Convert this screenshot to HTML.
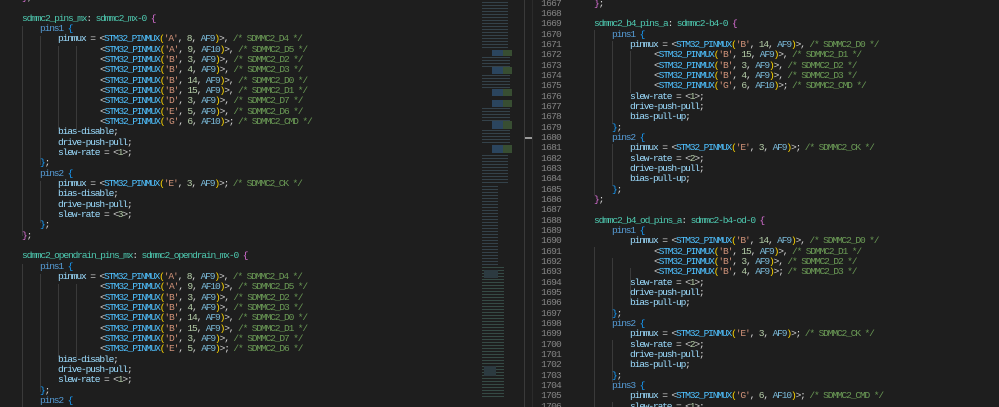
<!DOCTYPE html>
<html><head><meta charset="utf-8">
<style>
html,body{margin:0;padding:0;background:#1e1e1e;width:999px;height:407px;overflow:hidden;position:relative}
.pane{position:absolute;top:0;font-family:"Liberation Mono",monospace;font-size:9.6px;letter-spacing:-1.16px;color:#d4d4d4;}
.pane div{height:10.34px;line-height:10.34px;white-space:pre;}
.l0{padding-left:22px}.l1{padding-left:40px}.l2{padding-left:58px}.lc{padding-left:100px}
.r0{padding-left:594px}.r1{padding-left:612px}.r2{padding-left:630px}.rc{padding-left:654px}
.t{color:#4ec9b0}.p{color:#da70d6}.b{color:#569cd6}.bb{color:#179fff}.v{color:#9cdcfe}.f{color:#4fc1ff}
.y{color:#ffd700}.s{color:#ce9178}.n{color:#b5cea8}.c{color:#6a9955}.a{color:#7ab9d8}
.g{position:absolute;width:1px;background:#3a3a3a}
.ln{position:absolute;left:527px;width:34px;text-align:right;color:#858585;font-family:"Liberation Mono",monospace;font-size:9.6px;letter-spacing:-0.8px;}
.ln div{height:10.34px;line-height:10.34px}
.mm{position:absolute;height:1px}
.blk{position:absolute;left:16px;width:20px;background:repeating-linear-gradient(180deg,transparent 0 1px,rgba(0,0,0,0) 1px 2px),linear-gradient(90deg,#2f4f6e 0 55%,#3f5a38 55%);opacity:.8}
.dl{position:absolute;left:6px;width:30px;background:repeating-linear-gradient(180deg,#34424a 0 1px,transparent 1px 3px)}
</style></head><body>

<div class="g" style="left:22px;top:26px;height:210px"></div>
<div class="g" style="left:40px;top:36px;height:129px"></div>
<div class="g" style="left:40px;top:181px;height:42px"></div>
<div class="g" style="left:58px;top:46px;height:83px"></div>
<div class="g" style="left:76px;top:46px;height:83px"></div>
<div class="g" style="left:22px;top:264px;height:143px"></div>
<div class="g" style="left:40px;top:274px;height:118px"></div>
<div class="g" style="left:58px;top:284px;height:73px"></div>
<div class="g" style="left:76px;top:284px;height:73px"></div>
<div class="g" style="left:594px;top:30px;height:165px"></div>
<div class="g" style="left:612px;top:41px;height:83px"></div>
<div class="g" style="left:612px;top:144px;height:42px"></div>
<div class="g" style="left:630px;top:51px;height:42px"></div>
<div class="g" style="left:594px;top:247px;height:160px"></div>
<div class="g" style="left:612px;top:258px;height:62px"></div>
<div class="g" style="left:612px;top:340px;height:42px"></div>
<div class="g" style="left:612px;top:402px;height:5px"></div>
<div class="g" style="left:630px;top:268px;height:31px"></div>

<div class="pane" style="left:0;top:-6.9px;width:476px">
<div class="l0"><span class="p">}</span>;</div>
<div></div>
<div class="l0"><span class="t">sdmmc2_pins_mx</span>: <span class="t">sdmmc2_mx-0</span> <span class="p">{</span></div>
<div class="l1"><span class="b">pins1</span> <span class="bb">{</span></div>
<div class="l2"><span class="v">pinmux</span> = &lt;<span class="f">STM32_PINMUX</span><span class="y">(</span><span class="s">'A'</span>, <span class="n">8</span>, <span class="a">AF9</span><span class="y">)</span>&gt;, <span class="c">/* SDMMC2_D4 */</span></div>
<div class="lc">&lt;<span class="f">STM32_PINMUX</span><span class="y">(</span><span class="s">'A'</span>, <span class="n">9</span>, <span class="a">AF10</span><span class="y">)</span>&gt;, <span class="c">/* SDMMC2_D5 */</span></div>
<div class="lc">&lt;<span class="f">STM32_PINMUX</span><span class="y">(</span><span class="s">'B'</span>, <span class="n">3</span>, <span class="a">AF9</span><span class="y">)</span>&gt;, <span class="c">/* SDMMC2_D2 */</span></div>
<div class="lc">&lt;<span class="f">STM32_PINMUX</span><span class="y">(</span><span class="s">'B'</span>, <span class="n">4</span>, <span class="a">AF9</span><span class="y">)</span>&gt;, <span class="c">/* SDMMC2_D3 */</span></div>
<div class="lc">&lt;<span class="f">STM32_PINMUX</span><span class="y">(</span><span class="s">'B'</span>, <span class="n">14</span>, <span class="a">AF9</span><span class="y">)</span>&gt;, <span class="c">/* SDMMC2_D0 */</span></div>
<div class="lc">&lt;<span class="f">STM32_PINMUX</span><span class="y">(</span><span class="s">'B'</span>, <span class="n">15</span>, <span class="a">AF9</span><span class="y">)</span>&gt;, <span class="c">/* SDMMC2_D1 */</span></div>
<div class="lc">&lt;<span class="f">STM32_PINMUX</span><span class="y">(</span><span class="s">'D'</span>, <span class="n">3</span>, <span class="a">AF9</span><span class="y">)</span>&gt;, <span class="c">/* SDMMC2_D7 */</span></div>
<div class="lc">&lt;<span class="f">STM32_PINMUX</span><span class="y">(</span><span class="s">'E'</span>, <span class="n">5</span>, <span class="a">AF9</span><span class="y">)</span>&gt;, <span class="c">/* SDMMC2_D6 */</span></div>
<div class="lc">&lt;<span class="f">STM32_PINMUX</span><span class="y">(</span><span class="s">'G'</span>, <span class="n">6</span>, <span class="a">AF10</span><span class="y">)</span>&gt;; <span class="c">/* SDMMC2_CMD */</span></div>
<div class="l2"><span class="v">bias-disable</span>;</div>
<div class="l2"><span class="v">drive-push-pull</span>;</div>
<div class="l2"><span class="v">slew-rate</span> = &lt;<span class="n">1</span>&gt;;</div>
<div class="l1"><span class="bb">}</span>;</div>
<div class="l1"><span class="b">pins2</span> <span class="bb">{</span></div>
<div class="l2"><span class="v">pinmux</span> = &lt;<span class="f">STM32_PINMUX</span><span class="y">(</span><span class="s">'E'</span>, <span class="n">3</span>, <span class="a">AF9</span><span class="y">)</span>&gt;; <span class="c">/* SDMMC2_CK */</span></div>
<div class="l2"><span class="v">bias-disable</span>;</div>
<div class="l2"><span class="v">drive-push-pull</span>;</div>
<div class="l2"><span class="v">slew-rate</span> = &lt;<span class="n">3</span>&gt;;</div>
<div class="l1"><span class="bb">}</span>;</div>
<div class="l0"><span class="p">}</span>;</div>
<div></div>
<div class="l0"><span class="t">sdmmc2_opendrain_pins_mx</span>: <span class="t">sdmmc2_opendrain_mx-0</span> <span class="p">{</span></div>
<div class="l1"><span class="b">pins1</span> <span class="bb">{</span></div>
<div class="l2"><span class="v">pinmux</span> = &lt;<span class="f">STM32_PINMUX</span><span class="y">(</span><span class="s">'A'</span>, <span class="n">8</span>, <span class="a">AF9</span><span class="y">)</span>&gt;, <span class="c">/* SDMMC2_D4 */</span></div>
<div class="lc">&lt;<span class="f">STM32_PINMUX</span><span class="y">(</span><span class="s">'A'</span>, <span class="n">9</span>, <span class="a">AF10</span><span class="y">)</span>&gt;, <span class="c">/* SDMMC2_D5 */</span></div>
<div class="lc">&lt;<span class="f">STM32_PINMUX</span><span class="y">(</span><span class="s">'B'</span>, <span class="n">3</span>, <span class="a">AF9</span><span class="y">)</span>&gt;, <span class="c">/* SDMMC2_D2 */</span></div>
<div class="lc">&lt;<span class="f">STM32_PINMUX</span><span class="y">(</span><span class="s">'B'</span>, <span class="n">4</span>, <span class="a">AF9</span><span class="y">)</span>&gt;, <span class="c">/* SDMMC2_D3 */</span></div>
<div class="lc">&lt;<span class="f">STM32_PINMUX</span><span class="y">(</span><span class="s">'B'</span>, <span class="n">14</span>, <span class="a">AF9</span><span class="y">)</span>&gt;, <span class="c">/* SDMMC2_D0 */</span></div>
<div class="lc">&lt;<span class="f">STM32_PINMUX</span><span class="y">(</span><span class="s">'B'</span>, <span class="n">15</span>, <span class="a">AF9</span><span class="y">)</span>&gt;, <span class="c">/* SDMMC2_D1 */</span></div>
<div class="lc">&lt;<span class="f">STM32_PINMUX</span><span class="y">(</span><span class="s">'D'</span>, <span class="n">3</span>, <span class="a">AF9</span><span class="y">)</span>&gt;, <span class="c">/* SDMMC2_D7 */</span></div>
<div class="lc">&lt;<span class="f">STM32_PINMUX</span><span class="y">(</span><span class="s">'E'</span>, <span class="n">5</span>, <span class="a">AF9</span><span class="y">)</span>&gt;; <span class="c">/* SDMMC2_D6 */</span></div>
<div class="l2"><span class="v">bias-disable</span>;</div>
<div class="l2"><span class="v">drive-push-pull</span>;</div>
<div class="l2"><span class="v">slew-rate</span> = &lt;<span class="n">1</span>&gt;;</div>
<div class="l1"><span class="bb">}</span>;</div>
<div class="l1"><span class="b">pins2</span> <span class="bb">{</span></div>
</div>

<!-- minimap -->
<div style="position:absolute;left:476px;top:0;width:48px;height:407px;background:#1e1e1e;overflow:hidden">
<div class="dl" style="top:2px;height:46px;width:26px"></div>
<div class="blk" style="top:50px;height:6px"></div>
<div class="dl" style="top:57px;height:10px;width:28px"></div>
<div class="blk" style="top:67px;height:7px"></div>
<div class="dl" style="top:75px;height:14px;width:28px"></div>
<div class="blk" style="top:89px;height:7px"></div>
<div class="blk" style="top:100px;height:7px"></div>
<div class="dl" style="top:108px;height:13px;width:28px"></div>
<div class="blk" style="top:121px;height:8px"></div>
<div class="dl" style="top:130px;height:14px;width:28px"></div>
<div class="blk" style="top:145px;height:8px"></div>
<div class="dl" style="top:155px;height:30px;width:26px"></div>
<div class="dl" style="top:186px;height:80px;width:16px"></div>
<div class="dl" style="top:267px;height:130px;width:22px;background:repeating-linear-gradient(180deg,#354a45 0 1px,transparent 1px 3px)"></div>
<div style="position:absolute;left:8px;top:270px;width:14px;height:8px;background:#2c3a40"></div>
<div style="position:absolute;left:8px;top:366px;width:12px;height:10px;background:#2c3a40"></div>
</div>
<div style="position:absolute;left:524px;top:0;width:1px;height:407px;background:#3a3a3a"></div>
<div style="position:absolute;left:525px;top:137px;width:7px;height:2px;background:#9a9a9a"></div>
<div style="position:absolute;left:532px;top:0;width:1px;height:407px;background:#2b2b2b"></div>

<div class="ln" style="top:-1.2px">
<div>1667</div><div>1668</div><div>1669</div><div>1670</div><div>1671</div><div>1672</div><div>1673</div><div>1674</div><div>1675</div><div>1676</div><div>1677</div><div>1678</div><div>1679</div><div>1680</div><div>1681</div><div>1682</div><div>1683</div><div>1684</div><div>1685</div><div>1686</div><div>1687</div><div>1688</div><div>1689</div><div>1690</div><div>1691</div><div>1692</div><div>1693</div><div>1694</div><div>1695</div><div>1696</div><div>1697</div><div>1698</div><div>1699</div><div>1700</div><div>1701</div><div>1702</div><div>1703</div><div>1704</div><div>1705</div><div>1706</div>
</div>

<div class="pane" style="left:0;top:-1.2px;width:999px">
<div class="r0"><span class="p">}</span>;</div>
<div></div>
<div class="r0"><span class="t">sdmmc2_b4_pins_a</span>: <span class="t">sdmmc2-b4-0</span> <span class="p">{</span></div>
<div class="r1"><span class="b">pins1</span> <span class="bb">{</span></div>
<div class="r2"><span class="v">pinmux</span> = &lt;<span class="f">STM32_PINMUX</span><span class="y">(</span><span class="s">'B'</span>, <span class="n">14</span>, <span class="a">AF9</span><span class="y">)</span>&gt;, <span class="c">/* SDMMC2_D0 */</span></div>
<div class="rc">&lt;<span class="f">STM32_PINMUX</span><span class="y">(</span><span class="s">'B'</span>, <span class="n">15</span>, <span class="a">AF9</span><span class="y">)</span>&gt;, <span class="c">/* SDMMC2_D1 */</span></div>
<div class="rc">&lt;<span class="f">STM32_PINMUX</span><span class="y">(</span><span class="s">'B'</span>, <span class="n">3</span>, <span class="a">AF9</span><span class="y">)</span>&gt;, <span class="c">/* SDMMC2_D2 */</span></div>
<div class="rc">&lt;<span class="f">STM32_PINMUX</span><span class="y">(</span><span class="s">'B'</span>, <span class="n">4</span>, <span class="a">AF9</span><span class="y">)</span>&gt;, <span class="c">/* SDMMC2_D3 */</span></div>
<div class="rc">&lt;<span class="f">STM32_PINMUX</span><span class="y">(</span><span class="s">'G'</span>, <span class="n">6</span>, <span class="a">AF10</span><span class="y">)</span>&gt;; <span class="c">/* SDMMC2_CMD */</span></div>
<div class="r2"><span class="v">slew-rate</span> = &lt;<span class="n">1</span>&gt;;</div>
<div class="r2"><span class="v">drive-push-pull</span>;</div>
<div class="r2"><span class="v">bias-pull-up</span>;</div>
<div class="r1"><span class="bb">}</span>;</div>
<div class="r1"><span class="b">pins2</span> <span class="bb">{</span></div>
<div class="r2"><span class="v">pinmux</span> = &lt;<span class="f">STM32_PINMUX</span><span class="y">(</span><span class="s">'E'</span>, <span class="n">3</span>, <span class="a">AF9</span><span class="y">)</span>&gt;; <span class="c">/* SDMMC2_CK */</span></div>
<div class="r2"><span class="v">slew-rate</span> = &lt;<span class="n">2</span>&gt;;</div>
<div class="r2"><span class="v">drive-push-pull</span>;</div>
<div class="r2"><span class="v">bias-pull-up</span>;</div>
<div class="r1"><span class="bb">}</span>;</div>
<div class="r0"><span class="p">}</span>;</div>
<div></div>
<div class="r0"><span class="t">sdmmc2_b4_od_pins_a</span>: <span class="t">sdmmc2-b4-od-0</span> <span class="p">{</span></div>
<div class="r1"><span class="b">pins1</span> <span class="bb">{</span></div>
<div class="r2"><span class="v">pinmux</span> = &lt;<span class="f">STM32_PINMUX</span><span class="y">(</span><span class="s">'B'</span>, <span class="n">14</span>, <span class="a">AF9</span><span class="y">)</span>&gt;, <span class="c">/* SDMMC2_D0 */</span></div>
<div class="rc">&lt;<span class="f">STM32_PINMUX</span><span class="y">(</span><span class="s">'B'</span>, <span class="n">15</span>, <span class="a">AF9</span><span class="y">)</span>&gt;, <span class="c">/* SDMMC2_D1 */</span></div>
<div class="rc">&lt;<span class="f">STM32_PINMUX</span><span class="y">(</span><span class="s">'B'</span>, <span class="n">3</span>, <span class="a">AF9</span><span class="y">)</span>&gt;, <span class="c">/* SDMMC2_D2 */</span></div>
<div class="rc">&lt;<span class="f">STM32_PINMUX</span><span class="y">(</span><span class="s">'B'</span>, <span class="n">4</span>, <span class="a">AF9</span><span class="y">)</span>&gt;; <span class="c">/* SDMMC2_D3 */</span></div>
<div class="r2"><span class="v">slew-rate</span> = &lt;<span class="n">1</span>&gt;;</div>
<div class="r2"><span class="v">drive-push-pull</span>;</div>
<div class="r2"><span class="v">bias-pull-up</span>;</div>
<div class="r1"><span class="bb">}</span>;</div>
<div class="r1"><span class="b">pins2</span> <span class="bb">{</span></div>
<div class="r2"><span class="v">pinmux</span> = &lt;<span class="f">STM32_PINMUX</span><span class="y">(</span><span class="s">'E'</span>, <span class="n">3</span>, <span class="a">AF9</span><span class="y">)</span>&gt;; <span class="c">/* SDMMC2_CK */</span></div>
<div class="r2"><span class="v">slew-rate</span> = &lt;<span class="n">2</span>&gt;;</div>
<div class="r2"><span class="v">drive-push-pull</span>;</div>
<div class="r2"><span class="v">bias-pull-up</span>;</div>
<div class="r1"><span class="bb">}</span>;</div>
<div class="r1"><span class="b">pins3</span> <span class="bb">{</span></div>
<div class="r2"><span class="v">pinmux</span> = &lt;<span class="f">STM32_PINMUX</span><span class="y">(</span><span class="s">'G'</span>, <span class="n">6</span>, <span class="a">AF10</span><span class="y">)</span>&gt;; <span class="c">/* SDMMC2_CMD */</span></div>
<div class="r2"><span class="v">slew-rate</span> = &lt;<span class="n">1</span>&gt;;</div>
</div>
</body></html>
